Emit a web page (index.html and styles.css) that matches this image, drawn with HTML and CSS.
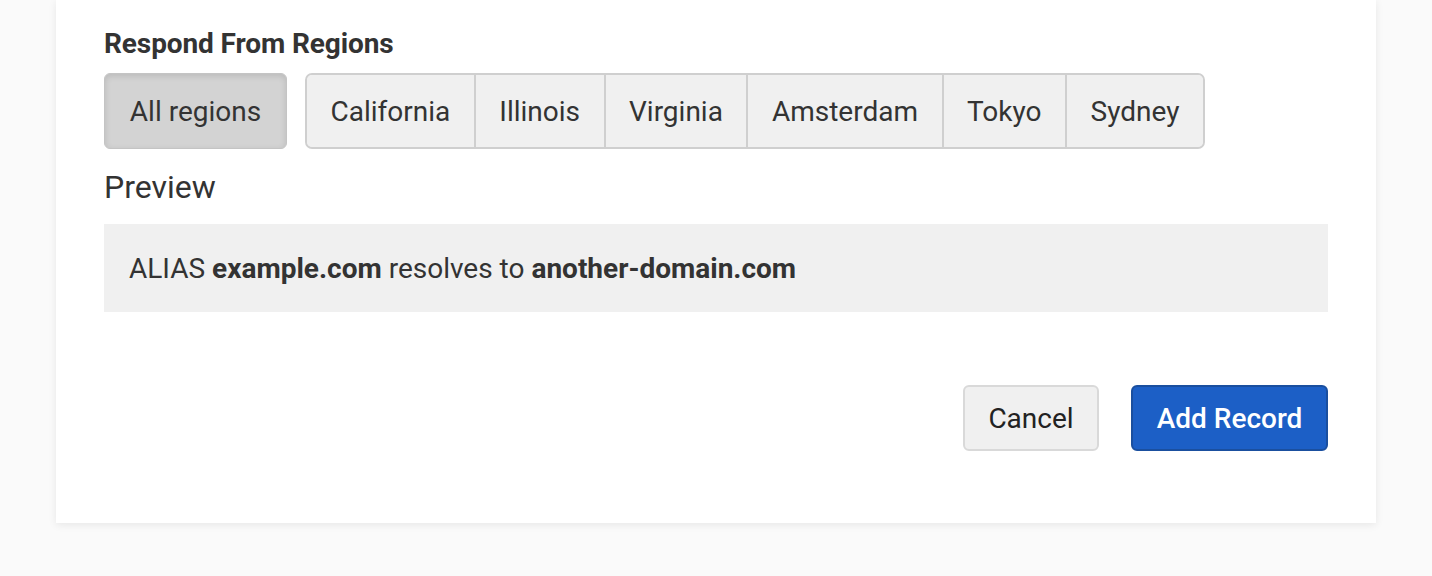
FILE: index.html
```html
<!DOCTYPE html>
<html>
<head>
<meta charset="utf-8">
<link rel="stylesheet" href="styles.css">
</head>
<body>
<div class="card">
  <h3 class="field-label">Respond From Regions</h3>
  <div class="regions">
    <button class="btn-all">All regions</button>
    <div class="group">
      <button class="seg">California</button>
      <button class="seg">Illinois</button>
      <button class="seg">Virginia</button>
      <button class="seg">Amsterdam</button>
      <button class="seg">Tokyo</button>
      <button class="seg">Sydney</button>
    </div>
  </div>
  <div class="preview-label">Preview</div>
  <div class="preview"><p class="preview-text">ALIAS <b>example.com</b> resolves to <b>another-domain.com</b></p></div>
  <div class="actions">
    <button class="btn-cancel">Cancel</button>
    <button class="btn-primary">Add Record</button>
  </div>
</div>
</body>
</html>
```

FILE: styles.css
```css
html, body {
  margin: 0;
  padding: 0;
}
body {
  background: #fafafa;
  font-family: Roboto, "Liberation Sans", sans-serif;
  color: #333;
  height: 576px;
  overflow: hidden;
}
.card {
  margin: 0 56px;
  background: #fff;
  box-shadow: 0 2px 8px rgba(0,0,0,0.08);
  padding: 28px 48px 72px;
}
.field-label {
  margin: 0 0 13px;
  font-size: 28px;
  line-height: 32px;
  font-weight: 700;
  color: #333;
  letter-spacing: -0.1px;
}
.regions {
  display: flex;
  gap: 18px;
  align-items: stretch;
}
button {
  font-family: Roboto, "Liberation Sans", sans-serif;
  cursor: pointer;
}
.btn-all {
  height: 76px;
  width: 183px;
  font-size: 28px;
  color: #333;
  background: #d3d3d3;
  border: 1px solid #c4c4c4;
  border-radius: 6px;
  box-shadow: inset 0 2px 6px rgba(0,0,0,0.12);
  padding: 0;
}
.group {
  display: flex;
  border: 2px solid #cfcfcf;
  border-radius: 7px;
  overflow: hidden;
  background: #f0f0f0;
  height: 76px;
  box-sizing: border-box;
}
.seg {
  font-size: 28px;
  color: #333;
  background: #f0f0f0;
  border: 0;
  border-left: 2px solid #cfcfcf;
  padding: 0 23.5px;
  height: 100%;
}
.seg:first-child {
  border-left: 0;
}
.preview-label {
  font-size: 32px;
  line-height: 36px;
  margin-top: 20px;
  color: #333;
}
.preview {
  margin-top: 19px;
  background: #f0f0f0;
  height: 88px;
  display: flex;
  align-items: center;
  padding: 0 25px;
}
.preview-text {
  margin: 0;
  font-size: 28px;
  color: #333;
}
.preview-text b {
  font-weight: 700;
}
.actions {
  display: flex;
  justify-content: flex-end;
  gap: 32px;
  margin-top: 73px;
}
.btn-cancel {
  height: 66px;
  width: 136px;
  font-size: 28px;
  color: #222;
  background: #f0f0f0;
  border: 2px solid #d9d9d9;
  border-radius: 6px;
}
.btn-primary {
  height: 66px;
  width: 197px;
  font-size: 28px;
  font-weight: 500;
  color: #fff;
  background: #1c5fc6;
  border: 2px solid #1a4f9f;
  border-radius: 6px;
}
```
